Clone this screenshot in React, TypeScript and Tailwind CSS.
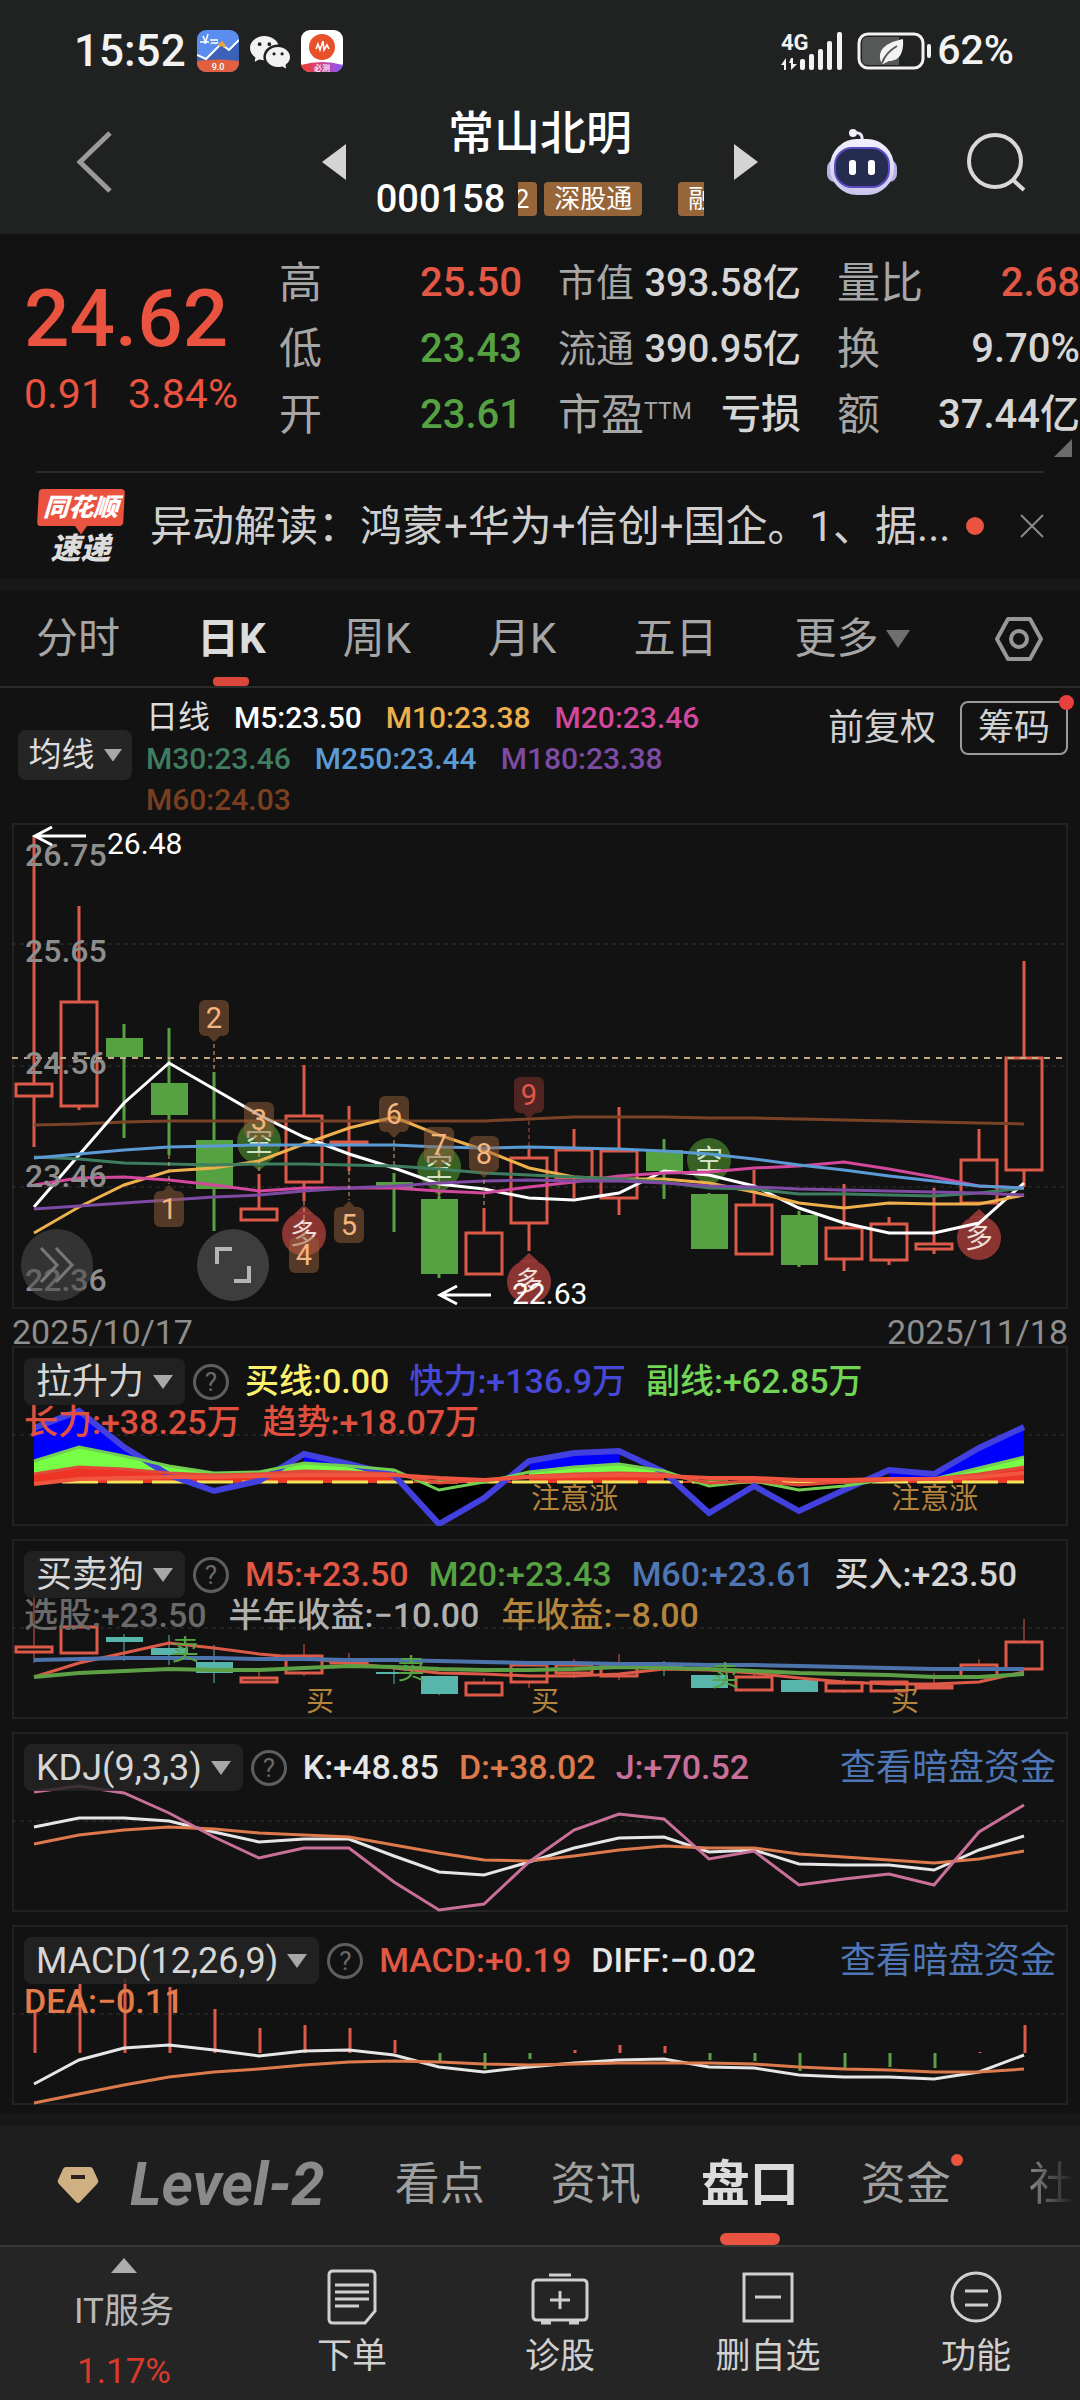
import type { ReactNode } from "react";
import { BsWechat } from "react-icons/bs";

type Candle = {
  up: boolean;
  high: number;
  top: number;
  bottom: number;
  low: number;
};
type Reading = { text: string; className: string };

const FIRST_X = 34;
const STEP = 45;
const colX = (index: number) => FIRST_X + index * STEP;
const toPoints = (values: number[], from = 0) => values.map((y, i) => `${colX(from + i)},${y}`).join(" ");

// [up, high, body top, body bottom, low]
const toCandle = ([up, high, top, bottom, low]: number[]): Candle => ({ up: up === 1, high, top, bottom, low });

const dayCandles = [
  [1, 836, 1084, 1096, 1147],
  [1, 906, 1002, 1106, 1110],
  [0, 1024, 1038, 1057, 1138],
  [0, 1028, 1083, 1115, 1155],
  [0, 1072, 1140, 1189, 1231],
  [1, 1174, 1209, 1220, 1221],
  [1, 1065, 1116, 1182, 1201],
  [1, 1106, 1142, 1143, 1171],
  [0, 1173, 1182, 1189, 1232],
  [0, 1196, 1199, 1274, 1278],
  [1, 1208, 1233, 1274, 1275],
  [1, 1149, 1158, 1223, 1251],
  [1, 1129, 1150, 1178, 1198],
  [1, 1107, 1151, 1198, 1215],
  [0, 1139, 1150, 1171, 1199],
  [0, 1193, 1194, 1249, 1249],
  [1, 1170, 1205, 1254, 1255],
  [0, 1211, 1215, 1265, 1267],
  [1, 1184, 1228, 1259, 1271],
  [1, 1217, 1224, 1260, 1265],
  [1, 1188, 1244, 1249, 1254],
  [1, 1129, 1160, 1203, 1204],
  [1, 961, 1058, 1170, 1187]
].map(toCandle);

const dogCandles = [
  [1, 1593, 1647, 1652, 1663],
  [1, 1626, 1627, 1653, 1654],
  [0, 1634, 1637, 1642, 1661],
  [0, 1635, 1648, 1655, 1665],
  [0, 1645, 1662, 1673, 1683],
  [1, 1670, 1678, 1682, 1683],
  [1, 1644, 1656, 1673, 1676],
  [1, 1653, 1661, 1663, 1664],
  [0, 1668, 1672, 1674, 1684],
  [0, 1676, 1676, 1694, 1695],
  [1, 1678, 1683, 1695, 1695],
  [1, 1664, 1665, 1682, 1688],
  [1, 1659, 1665, 1673, 1678],
  [1, 1654, 1665, 1676, 1680],
  [0, 1661, 1665, 1667, 1676],
  [0, 1675, 1675, 1688, 1688],
  [1, 1672, 1677, 1690, 1690],
  [0, 1680, 1680, 1692, 1692],
  [1, 1679, 1683, 1691, 1693],
  [1, 1681, 1682, 1691, 1691],
  [1, 1673, 1686, 1688, 1689],
  [1, 1659, 1665, 1677, 1677],
  [1, 1619, 1642, 1669, 1670]
].map(toCandle);

const averages = [
  { color: "#7a4327", values: [1125, 1124, 1122, 1121, 1121, 1121, 1121, 1121, 1121, 1121, 1121, 1119, 1117, 1117, 1117, 1118, 1118, 1119, 1120, 1121, 1122, 1123, 1124] },
  { color: "#ffffff", values: [1207, 1155, 1103, 1063, 1089, 1115, 1137, 1154, 1168, 1184, 1189, 1198, 1200, 1193, 1171, 1175, 1186, 1208, 1223, 1233, 1233, 1223, 1183] },
  { color: "#eeb04c", values: [1233, 1207, 1185, 1171, 1168, 1161, 1144, 1128, 1117, 1135, 1150, 1168, 1177, 1179, 1179, 1183, 1192, 1203, 1208, 1203, 1204, 1204, 1195] },
  { color: "#d1489c", values: [1185, 1178, 1177, 1180, 1185, 1191, 1188, 1188, 1188, 1191, 1193, 1187, 1182, 1176, 1173, 1172, 1168, 1166, 1162, 1169, 1177, 1186, 1188] },
  { color: "#3f7d61", values: [1157, 1159, 1163, 1164, 1165, 1164, 1164, 1165, 1166, 1169, 1173, 1175, 1177, 1179, 1182, 1188, 1189, 1194, 1194, 1195, 1196, 1193, 1188] },
  { color: "#5b9bd5", values: [1158, 1154, 1150, 1147, 1146, 1145, 1145, 1145, 1145, 1147, 1148, 1147, 1148, 1149, 1151, 1154, 1159, 1165, 1170, 1176, 1181, 1186, 1188] },
  { color: "#7d4ba3", values: [1209, 1206, 1203, 1200, 1197, 1195, 1191, 1188, 1186, 1183, 1181, 1180, 1181, 1181, 1183, 1186, 1187, 1189, 1190, 1191, 1192, 1193, 1195] }
];

// Nine-turn counters: top is the upper edge of the tag
const turnTags = [
  { col: 3, label: "1", top: 1191, below: true },
  { col: 4, label: "2", top: 1000, below: false },
  { col: 5, label: "3", top: 1102, below: false },
  { col: 6, label: "4", top: 1237, below: true },
  { col: 7, label: "5", top: 1207, below: true },
  { col: 8, label: "6", top: 1096, below: false },
  { col: 9, label: "7", top: 1127, below: false },
  { col: 10, label: "8", top: 1136, below: false },
  { col: 11, label: "9", top: 1077, below: false }
];

const signals = [
  { col: 5, y: 1142, label: "空" },
  { col: 9, y: 1167, label: "空" },
  { col: 15, y: 1160, label: "空" },
  { col: 6, y: 1234, label: "多" },
  { col: 11, y: 1282, label: "多" },
  { col: 21, y: 1238, label: "多" }
];

const scaleLabels = [
  { label: "26.75", y: 866 },
  { label: "25.65", y: 962 },
  { label: "24.56", y: 1074 },
  { label: "23.46", y: 1187 },
  { label: "22.36", y: 1291 }
];

const lift = {
  quick: [1428, 1411, 1447, 1475, 1491, 1481, 1454, 1464, 1475, 1524, 1498, 1461, 1453, 1451, 1472, 1513, 1486, 1511, 1490, 1470, 1474, 1448, 1427],
  second: [1461, 1447, 1456, 1466, 1473, 1472, 1463, 1466, 1470, 1490, 1482, 1472, 1467, 1464, 1471, 1486, 1481, 1490, 1486, 1479, 1479, 1468, 1457],
  long: [1474, 1467, 1469, 1473, 1475, 1474, 1471, 1472, 1474, 1483, 1480, 1476, 1474, 1473, 1474, 1483, 1481, 1485, 1482, 1480, 1479, 1474, 1467],
  trend: [1484, 1479, 1478, 1477, 1477, 1476, 1475, 1475, 1475, 1478, 1480, 1477, 1476, 1475, 1476, 1478, 1478, 1480, 1480, 1479, 1479, 1477, 1473]
};

const dog = {
  m5: [1677, 1663, 1653, 1643, 1648, 1654, 1658, 1663, 1668, 1673, 1674, 1676, 1676, 1674, 1669, 1670, 1673, 1678, 1682, 1684, 1684, 1682, 1672],
  m20: [1677, 1673, 1671, 1669, 1670, 1670, 1668, 1666, 1667, 1669, 1670, 1670, 1669, 1667, 1668, 1669, 1671, 1673, 1674, 1675, 1677, 1677, 1674],
  m60: [1660, 1659, 1658, 1658, 1658, 1659, 1659, 1660, 1660, 1661, 1662, 1663, 1663, 1664, 1664, 1665, 1665, 1666, 1667, 1668, 1669, 1669, 1669]
};

const kdj = {
  k: [1827, 1818, 1818, 1821, 1832, 1842, 1839, 1839, 1856, 1872, 1875, 1862, 1848, 1838, 1837, 1852, 1850, 1864, 1865, 1865, 1870, 1850, 1836],
  d: [1844, 1835, 1830, 1827, 1829, 1833, 1835, 1837, 1845, 1853, 1860, 1861, 1856, 1850, 1846, 1848, 1848, 1854, 1857, 1860, 1863, 1859, 1851],
  j: [1792, 1786, 1793, 1813, 1837, 1858, 1848, 1848, 1882, 1910, 1904, 1862, 1830, 1814, 1819, 1859, 1851, 1885, 1879, 1874, 1885, 1832, 1805]
};

const macd = {
  bars: [2013, 1984, 1978, 1987, 2009, 2028, 2025, 2028, 2040, 2061, 2069, 2059, 2050, 2045, 2046, 2060, 2061, 2071, 2068, 2067, 2068, 2052, 2025],
  diff: [2084, 2060, 2048, 2045, 2050, 2056, 2051, 2050, 2055, 2067, 2072, 2067, 2063, 2060, 2059, 2067, 2068, 2075, 2077, 2077, 2079, 2072, 2055],
  dea: [2103, 2094, 2085, 2077, 2072, 2069, 2065, 2062, 2061, 2062, 2064, 2065, 2064, 2063, 2063, 2063, 2064, 2067, 2069, 2070, 2072, 2072, 2069]
};

function Line({ values, color, width = 3 }: { values: number[]; color: string; width?: number }) {
  return <polyline points={toPoints(values)} fill="none" stroke={color} strokeWidth={width} />;
}

function GridLine({ y }: { y: number }) {
  return <line x1="12" x2="1068" y1={y} y2={y} stroke="#333" strokeWidth="1" strokeDasharray="4 4" />;
}

function Candles({ data, down, wick = 3 }: { data: Candle[]; down: string; wick?: number }) {
  return (
    <>
      {data.map((c, i) => {
        const x = colX(i);
        const color = c.up ? "#dd5a48" : down;
        return (
          <g key={i} stroke={color} strokeWidth={wick}>
            <line x1={x} x2={x} y1={c.high} y2={c.top} />
            <line x1={x} x2={x} y1={c.bottom} y2={c.low} />
            {c.up ? (
              <rect x={x - 18} y={c.top} width="36" height={c.bottom - c.top} fill="none" strokeWidth="3" />
            ) : (
              <rect x={x - 18} y={c.top} width="37" height={c.bottom - c.top} fill={down} stroke="none" />
            )}
          </g>
        );
      })}
    </>
  );
}

function TurnTag({ col, label, top, below }: (typeof turnTags)[number]) {
  const x = colX(col);
  const last = label === "9";
  const line = last ? "#b9504a" : "#e0a774";
  const tail = below ? `${x - 6},${top} ${x + 6},${top} ${x},${top - 6}` : `${x - 6},${top + 36} ${x + 6},${top + 36} ${x},${top + 42}`;
  return (
    <g>
      <g fill={last ? "#7a302c" : "#966039"} fillOpacity={last ? 0.6 : 0.5}>
        <rect x={x - 15} y={top} width="30" height="36" rx="6" />
        <polygon points={tail} />
      </g>
      <line x1={x} x2={x} y1={below ? top - 36 : top + 44} y2={below ? top - 7 : top + 72} stroke={line} strokeWidth="1" strokeDasharray="4 3" />
      <text x={x} y={top + 28} textAnchor="middle" fontSize="29" fill={last ? "#e0584c" : "#f5b57e"}>
        {label}
      </text>
    </g>
  );
}

function Signal({ col, y, label }: (typeof signals)[number]) {
  const x = colX(col);
  const long = label === "多";
  const tip = long ? -1 : 1;
  return (
    <g>
      <g fill={long ? "#a13c3a" : "#3f7028"} fillOpacity="0.85">
        <circle cx={x} cy={y} r="22" />
        <path d={`M${x - 10} ${y + tip * 20} L${x} ${y + tip * 29} L${x + 10} ${y + tip * 20} Z`} />
      </g>
      <text x={x} y={y + 10} textAnchor="middle" fontSize="28" fill={long ? "#f0dcd8" : "#d3e3c8"}>
        {label}
      </text>
    </g>
  );
}

function Arrow({ x, y }: { x: number; y: number }) {
  return <path d={`M${x + 52} ${y} H${x + 1} M${x + 18} ${y - 9} L${x + 1} ${y} L${x + 18} ${y + 9}`} fill="none" stroke="#fff" strokeWidth="3" />;
}

function DayChart() {
  return (
    <svg viewBox="12 823 1056 486" className="block w-full" role="img" aria-label="日K线图">
      {[944, 1066, 1187].map((y) => (
        <GridLine key={y} y={y} />
      ))}
      <Candles data={dayCandles} down="#56a142" />
      <line x1="12" x2="1068" y1="1058" y2="1058" stroke="#c4ac85" strokeWidth="2" strokeDasharray="6 6" />
      {signals.map((s) => (
        <Signal key={s.col} {...s} />
      ))}
      {averages.map((a) => (
        <Line key={a.color} values={a.values} color={a.color} />
      ))}
      {turnTags.map((t) => (
        <TurnTag key={t.label} {...t} />
      ))}
      <g fontSize="32" fontWeight="500" fill="#8e8e8e">
        {scaleLabels.map((s) => (
          <text key={s.label} x="25" y={s.y}>
            {s.label}
          </text>
        ))}
      </g>
      <Arrow x={34} y={836} />
      <Arrow x={439} y={1295} />
      <g fontSize="30" fill="#fff">
        <text x="107" y="854">26.48</text>
        <text x="512" y="1304">22.63</text>
      </g>
    </svg>
  );
}

function LiftChart() {
  const area = (upper: number[], lower: number[], from: number, to: number) => {
    const back = lower.slice(from, to + 1).map((y, i) => `${colX(from + i)},${y}`).reverse().join(" ");
    return `${toPoints(upper.slice(from, to + 1), from)} ${back}`;
  };
  const zero = lift.quick.map(() => 1482);
  return (
    <svg viewBox="12 1346 1056 180" className="col-start-1 row-start-1 block w-full" role="img" aria-label="拉升力">
      <GridLine y={1435} />
      <polygon points="401,1482 439,1524 508,1482" fill="#000" />
      <polygon points="672,1482 709,1513 754,1486 799,1511 860,1482" fill="#000" />
      <g fill="#0000ff">
        <polygon points={area(lift.quick, lift.second, 0, 2)} />
        <polygon points="124,1447 152,1465 124,1456" />
        <polygon points={area(lift.quick, lift.second, 6, 7)} />
        <polygon points={area(lift.quick, lift.second, 11, 13)} />
        <polygon points={area(lift.quick, lift.second, 19, 22)} />
      </g>
      <g fill="#76ff45">
        <polygon points={area(lift.second, lift.long, 0, 8)} />
        <polygon points={area(lift.second, lift.long, 11, 14)} />
        <polygon points={area(lift.second, lift.long, 20, 22)} />
      </g>
      <g fill="#ee3424">
        <polygon points={area(lift.long, zero, 0, 8)} />
        <polygon points={area(lift.long, zero, 11, 14)} />
        <polygon points={area(lift.long, zero, 19, 22)} />
      </g>
      <line x1="34" x2="1024" y1="1482" y2="1482" stroke="#e8392b" strokeWidth="2" />
      <line x1="62" x2="1024" y1="1482" y2="1482" stroke="#f5e35c" strokeWidth="3" strokeDasharray="36 9" />
      <Line values={lift.quick} color="#4340e0" width={6} />
      <Line values={lift.second} color="#72cf52" width={3} />
      <Line values={lift.long} color="#e04a3a" width={3} />
      <Line values={lift.trend} color="#f0563f" width={4} />
      <g fontSize="29" fill="#b5843c">
        <text x="531" y="1509">注意涨</text>
        <text x="891" y="1509">注意涨</text>
      </g>
    </svg>
  );
}

function DogChart() {
  return (
    <svg viewBox="12 1539 1056 180" className="col-start-1 row-start-1 block w-full" role="img" aria-label="买卖狗">
      <GridLine y={1628} />
      <Candles data={dogCandles} down="#58b5ab" wick={1} />
      <Line values={dog.m5} color="#dd5a48" />
      <Line values={dog.m20} color="#5d9f45" width={4} />
      <Line values={dog.m60} color="#4d73ad" width={4} />
      <g fontSize="28" fill="#55a345">
        <text x="171" y="1660">卖</text>
        <text x="397" y="1679">卖</text>
        <text x="711" y="1686">卖</text>
      </g>
      <g fontSize="28" fill="#b5843c">
        <text x="306" y="1711">买</text>
        <text x="531" y="1711">买</text>
        <text x="891" y="1711">买</text>
      </g>
    </svg>
  );
}

function KdjChart() {
  return (
    <svg viewBox="12 1732 1056 180" className="col-start-1 row-start-1 block w-full" role="img" aria-label="KDJ">
      <GridLine y={1821} />
      <Line values={kdj.k} color="#e6e6e6" />
      <Line values={kdj.d} color="#dd7a4c" />
      <Line values={kdj.j} color="#c9709a" />
    </svg>
  );
}

function MacdChart() {
  return (
    <svg viewBox="12 1925 1056 180" className="col-start-1 row-start-1 block w-full" role="img" aria-label="MACD">
      <GridLine y={2014} />
      {macd.bars.map((y, i) => (
        <line key={i} x1={colX(i) + 1} x2={colX(i) + 1} y1={y} y2="2053" stroke={y < 2053 ? "#dd5a48" : "#5d9f45"} strokeWidth="3" />
      ))}
      <Line values={macd.diff} color="#e6e6e6" />
      <Line values={macd.dea} color="#dd7a4c" />
    </svg>
  );
}

function Triangle({ className }: { className: string }) {
  return (
    <svg viewBox="0 0 20 14" className={className} aria-hidden="true">
      <path d="M0 0 H20 L10 14 Z" fill="currentColor" />
    </svg>
  );
}

function IndicatorPanel({
  name,
  first,
  second = [],
  link = false,
  children
}: {
  name: string;
  first: Reading[];
  second?: Reading[];
  link?: boolean;
  children: ReactNode;
}) {
  return (
    <section className="grid grid-cols-1 ring-2 ring-[#222] ring-inset">
      {children}
      <div className="relative col-start-1 row-start-1 px-3 pt-3 text-[34px] font-medium whitespace-nowrap">
        <div className="flex h-[47px] items-center">
          <label className="flex h-[47px] items-center gap-[9px] rounded-lg bg-[#252525]/85 px-3 text-[#d6d6d6]">
            <select aria-label="指标" className="field-sizing-content appearance-none bg-transparent text-[36px] leading-[44px] font-normal outline-none">
              <option>{name}</option>
            </select>
            <Triangle className="w-5 text-[#a8a8a8]" />
          </label>
          <button type="button" aria-label="指标说明" className="ml-2 grid size-9 shrink-0 place-items-center rounded-full border-3 border-[#5e5e5e] text-[26px] leading-none font-normal text-[#6a6a6a]">
            ?
          </button>
          <div className="ml-4 flex gap-5">
            {first.map((r) => (
              <span key={r.text} className={r.className}>{r.text}</span>
            ))}
          </div>
          {link ? (
            <a href="#funds" className="ml-auto text-[36px] font-normal text-[#4f77b5]">
              查看暗盘资金
            </a>
          ) : null}
        </div>
        <div className="flex gap-[22px] leading-[34px]">
          {second.map((r) => (
            <span key={r.text} className={r.className}>{r.text}</span>
          ))}
        </div>
      </div>
    </section>
  );
}

function StatusBar() {
  return (
    <div className="flex h-[102px] items-center justify-between pr-[66px] pl-[74px] text-[44px] font-medium text-[#f2f2f2]">
      <div className="flex items-center gap-[11px]">
        <span>15:52</span>
        <svg viewBox="0 0 42 42" className="size-[42px]" aria-hidden="true">
          <rect width="42" height="42" rx="9" fill="#5b8def" />
          <path d="M0 26 L9 29 L24 14 L32 20 L42 10 V33 H0Z" fill="#3c62b8" />
          <path d="M0 25 L9 29 L24 14 L32 20 L42 10" fill="none" stroke="#fff" strokeWidth="2" />
          <path d="M22 16 L25 13 L28 17" fill="none" stroke="#f0a23c" strokeWidth="3" />
          <path d="M3 12 H12 M6 6 L9 13 M11 4 L8 14 M13 10 H21 M14 14 C16 10 18 16 21 12" fill="none" stroke="#fff" strokeWidth="1.5" />
          <path d="M0 31 Q21 28 42 31 V33 A9 9 0 0 1 33 42 H9 A9 9 0 0 1 0 33Z" fill="#e0603f" />
          <text x="21" y="40" textAnchor="middle" fontSize="9" fill="#fff">9.0</text>
        </svg>
        <BsWechat size={40} />
        <svg viewBox="0 0 42 42" className="size-[42px]" aria-hidden="true">
          <defs>
            <linearGradient id="badge" x1="0" x2="1">
              <stop offset="0" stopColor="#e8402c" />
              <stop offset="0.5" stopColor="#d63f8f" />
              <stop offset="1" stopColor="#7c5cff" />
            </linearGradient>
          </defs>
          <rect width="42" height="42" rx="9" fill="#fff" />
          <circle cx="21" cy="17" r="13" fill="#e8502a" />
          <path d="M15 19 L17 14 L19 20 L22 11 L23 20 L26 15 L28 19" fill="none" stroke="#fff" strokeWidth="1.6" />
          <path d="M0 35 Q21 29 42 35 A9 9 0 0 1 33 42 H9 A9 9 0 0 1 0 35Z" fill="url(#badge)" />
          <text x="21" y="41" textAnchor="middle" fontSize="8" fill="#fff">必测</text>
        </svg>
      </div>
      <div className="flex items-center">
        <svg viewBox="0 0 62 38" className="h-[38px] w-[62px]" aria-hidden="true">
          <text x="0" y="18" fontSize="22" fontWeight="700" fill="#f2f2f2">4G</text>
          <g fill="#f2f2f2">
            <rect x="19" y="27" width="5" height="11" rx="2" />
            <rect x="28" y="22" width="5" height="16" rx="2" />
            <rect x="37" y="17" width="5" height="21" rx="2" />
            <rect x="46" y="9" width="5" height="29" rx="2" />
            <rect x="56" y="0" width="5" height="38" rx="2" />
            <path d="M0 33 L5 26 V38 H3 V33Z M10 26 V31 H8 M10 38 L16 32 H12 V26 H10Z" />
          </g>
        </svg>
        <svg viewBox="0 0 76 38" className="ml-[14px] h-[38px] w-[76px]" aria-hidden="true">
          <path d="M10 5 H42 V33 H10 A5 5 0 0 1 5 28 V10 A5 5 0 0 1 10 5Z" fill="#555857" />
          <rect x="2" y="2" width="64" height="34" rx="9" fill="none" stroke="#f2f2f2" strokeWidth="3" />
          <rect x="70" y="12" width="4" height="14" rx="2" fill="#f2f2f2" />
          <path d="M46 7 C47 20 43 29 32 29 L26 32 L24 30 C20 18 28 11 46 7Z" fill="#f2f2f2" />
          <path d="M25 31 C28 23 33 18 40 14" fill="none" stroke="#555857" strokeWidth="2" />
        </svg>
        <span className="ml-1 text-[41px]">62%</span>
      </div>
    </div>
  );
}

function Robot() {
  return (
    <svg viewBox="0 0 72 68" className="h-[68px] w-[72px]" aria-hidden="true">
      <defs>
        <linearGradient id="shell" x1="0" y1="0" x2="0" y2="1">
          <stop offset="0" stopColor="#f3f1ff" />
          <stop offset="1" stopColor="#c9c4ec" />
        </linearGradient>
      </defs>
      <path d="M36 13 C37 6 33 4 28 5" fill="none" stroke="#e9e7fa" strokeWidth="3" />
      <circle cx="27" cy="5" r="4" fill="#f1effc" />
      <rect x="1" y="32" width="70" height="22" rx="8" fill="#b9b3e4" />
      <rect x="4" y="11" width="64" height="56" rx="27" fill="url(#shell)" />
      <rect x="9" y="20" width="54" height="39" rx="17" fill="#242c50" stroke="#5a4bc0" strokeWidth="2" />
      <rect x="23" y="32" width="7" height="15" rx="3" fill="#fff" />
      <rect x="42" y="32" width="7" height="15" rx="3" fill="#fff" />
    </svg>
  );
}

function TitleBar() {
  return (
    <div className="grid h-[132px] grid-cols-[1fr_auto_1fr] items-center pb-3">
      <button type="button" aria-label="返回" className="ml-[76px] w-9">
        <svg viewBox="0 0 36 62" className="h-[62px] w-9 text-[#9a9a9a]" aria-hidden="true">
          <path d="M34 2 L4 31 L34 60" fill="none" stroke="currentColor" strokeWidth="5" />
        </svg>
      </button>
      <div className="flex items-center gap-[30px] text-white">
        <button type="button" aria-label="上一只">
          <svg viewBox="0 0 24 36" className="h-9 w-6 text-[#d4d4d4]" aria-hidden="true">
            <path d="M24 0 V36 L0 18Z" fill="currentColor" />
          </svg>
        </button>
        <div className="flex flex-col items-center gap-[18px]">
          <h1 className="text-[46px] leading-[56px] font-medium">常山北明</h1>
          <div className="flex h-10 items-center gap-[13px]">
            <span className="text-[38px] leading-10 font-medium">000158</span>
            <div className="flex w-[186px] gap-[7px] overflow-hidden text-[26px] leading-[34px] whitespace-nowrap">
              <span className="flex w-[19px] shrink-0 justify-end rounded-r-sm bg-[#966539] pr-2">2</span>
              <span className="mr-[29px] shrink-0 rounded-sm bg-[#966539] px-[10px]">深股通</span>
              <span className="shrink-0 rounded-sm bg-[#966539] px-[10px]">融</span>
            </div>
          </div>
        </div>
        <button type="button" aria-label="下一只">
          <svg viewBox="0 0 24 36" className="h-9 w-6 text-[#d4d4d4]" aria-hidden="true">
            <path d="M0 0 V36 L24 18Z" fill="currentColor" />
          </svg>
        </button>
      </div>
      <div className="flex items-center justify-end gap-[68px] pr-[54px]">
        <button type="button" aria-label="智能助手">
          <Robot />
        </button>
        <button type="button" aria-label="搜索">
          <svg viewBox="0 0 60 60" className="size-[60px] text-[#d8d8d8]" aria-hidden="true">
            <circle cx="29" cy="29" r="26" fill="none" stroke="currentColor" strokeWidth="4" />
            <path d="M47 48 L58 58" stroke="currentColor" strokeWidth="4" />
          </svg>
        </button>
      </div>
    </div>
  );
}

function QuoteRow({ label, value, className = "text-[#d6d6d6]", small = false }: { label: ReactNode; value: string; className?: string; small?: boolean }) {
  return (
    <div className={small ? "flex justify-between text-[38px]" : "flex justify-between text-[40px]"}>
      <dt className={small ? "text-[#a6a6a6]" : "text-[43px] text-[#a6a6a6]"}>{label}</dt>
      <dd className={`font-medium ${className}`}>{value}</dd>
    </div>
  );
}

function Quote() {
  return (
    <section className="relative flex pt-4 pb-[23px] whitespace-nowrap">
      <div className="w-[279px] shrink-0 pt-[29px] pl-6 text-[#e9533f]">
        <p className="text-[80px] leading-[80px] font-medium">24.62</p>
        <p className="mt-[10px] flex gap-6 text-[41px] leading-[50px]">
          <span>0.91</span>
          <span>3.84%</span>
        </p>
      </div>
      <div className="grid flex-1 grid-cols-3 gap-x-9 leading-[66px]">
        <dl>
          <QuoteRow label="高" value="25.50" className="text-[#e35745]" />
          <QuoteRow label="低" value="23.43" className="text-[#56a142]" />
          <QuoteRow label="开" value="23.61" className="text-[#56a142]" />
        </dl>
        <dl>
          <QuoteRow label="市值" value="393.58亿" small />
          <QuoteRow label="流通" value="390.95亿" small />
          <QuoteRow label={<>市盈<sup className="text-[23px]">TTM</sup></>} value="亏损" />
        </dl>
        <dl>
          <QuoteRow label="量比" value="2.68" className="text-[#e35745]" />
          <QuoteRow label="换" value="9.70%" />
          <QuoteRow label="额" value="37.44亿" />
        </dl>
      </div>
      <svg viewBox="0 0 18 18" className="absolute right-2 bottom-[14px] size-[18px] text-[#6b6b6b]" aria-hidden="true">
        <path d="M18 0 V18 H0Z" fill="currentColor" />
      </svg>
    </section>
  );
}

function News() {
  return (
    <section className="mx-9 flex h-[108px] items-center border-t-2 border-[#2b2b2b]">
      <div className="mr-[25px] flex w-[89px] shrink-0 flex-col items-center font-black italic">
        <span className="w-[86px] -skew-x-3 rounded-sm bg-[#e9533f] text-center text-[25px] leading-[37px] text-white">同花顺</span>
        <Triangle className="w-3 text-[#e9533f]" />
        <span className="text-[30px] leading-[28px] text-[#dcdcdc]">速递</span>
      </div>
      <a href="#news" className="flex-1 truncate text-[42px] text-[#cfcfcf]">异动解读：鸿蒙+华为+信创+国企。1、据...</a>
      <span className="ml-3 size-[18px] shrink-0 rounded-full bg-[#e9533f]" />
      <button type="button" aria-label="关闭" className="ml-9 shrink-0">
        <svg viewBox="0 0 24 24" className="size-6 text-[#8a8a8a]" aria-hidden="true">
          <path d="M1 1 L23 23 M23 1 L1 23" stroke="currentColor" strokeWidth="2" />
        </svg>
      </button>
    </section>
  );
}

function PeriodTabs() {
  return (
    <nav className="flex h-[97px] items-stretch gap-[77px] border-b-2 border-[#2b2b2b] px-9 text-[42px] whitespace-nowrap text-[#a6a6a6]">
      <button type="button">分时</button>
      <button type="button" aria-current="true" className="relative font-bold text-[#dcdcdc]">
        日K
        <span className="absolute bottom-0 left-1/2 h-[9px] w-9 -translate-x-1/2 rounded-sm bg-[#d9483a]" />
      </button>
      <button type="button">周K</button>
      <button type="button">月K</button>
      <button type="button">五日</button>
      <button type="button" aria-haspopup="menu" className="flex items-center gap-2">
        更多
        <svg viewBox="0 0 24 18" className="w-6 text-[#6f6f6f]" aria-hidden="true">
          <path d="M0 0 H24 L12 18Z" fill="currentColor" />
        </svg>
      </button>
      <button type="button" aria-label="设置" className="ml-auto">
        <svg viewBox="0 0 50 46" className="h-[46px] w-[50px] text-[#979797]" fill="none" stroke="currentColor" strokeWidth="4" strokeLinejoin="round" aria-hidden="true">
          <path d="M14 3 H36 L47 23 L36 43 H14 L3 23Z" />
          <circle cx="25" cy="23" r="8" />
        </svg>
      </button>
    </nav>
  );
}

function AverageLegend() {
  return (
    <section className="flex items-start gap-[14px] pt-[9px] pr-3 pb-[3px] pl-[18px] whitespace-nowrap">
      <label className="mt-[33px] flex h-[50px] w-[114px] shrink-0 items-center justify-center gap-[9px] rounded-lg bg-[#252525] text-[#dcdcdc]">
        <select aria-label="主图指标" className="field-sizing-content appearance-none bg-transparent text-[33px] leading-10 outline-none">
          <option>均线</option>
        </select>
        <Triangle className="w-[18px] text-[#a8a8a8]" />
      </label>
      <div className="flex max-w-[640px] flex-1 flex-wrap gap-x-6 text-[30px] leading-[41px] font-medium">
        <span className="text-[32px] font-normal text-[#dcdcdc]">日线</span>
        <span className="text-white">M5:23.50</span>
        <span className="text-[#eeb04c]">M10:23.38</span>
        <span className="text-[#d1489c]">M20:23.46</span>
        <span className="text-[#3f7d61]">M30:23.46</span>
        <span className="text-[#5b9bd5]">M250:23.44</span>
        <span className="text-[#7d4ba3]">M180:23.38</span>
        <span className="text-[#7a3f20]">M60:24.03</span>
      </div>
      <div className="mt-1 ml-auto flex items-center gap-6 text-[36px] text-[#d0d0d0]">
        <button type="button" className="leading-[54px]">前复权</button>
        <button type="button" className="relative h-[54px] rounded-lg border-2 border-[#9a9a9a] px-4 leading-[50px]">
          筹码
          <span className="absolute -top-2 -right-2 size-[15px] rounded-full bg-[#e8403c]" />
        </button>
      </div>
    </section>
  );
}

function BottomTabs() {
  return (
    <nav className="flex h-[120px] items-stretch overflow-hidden bg-[#1e1e1e] pl-[57px] text-[45px] whitespace-nowrap text-[#a0a0a0]">
      <button type="button" className="flex items-center gap-[31px] text-[60px] font-bold text-[#8a8a8a] italic">
        <svg viewBox="0 0 42 36" className="w-[42px]" aria-hidden="true">
          <path d="M9 0 H33 Q35 0 36 2 L41 13 Q42 15 40 17 L23 35 Q21 37 19 35 L2 17 Q0 15 1 13 L6 2 Q7 0 9 0Z" fill="#cfb083" />
          <path d="M14 10 H28" stroke="#2a241c" strokeWidth="4" />
        </svg>
        Level-2
      </button>
      <button type="button" className="ml-[70px]">看点</button>
      <button type="button" className="ml-[66px]">资讯</button>
      <button type="button" aria-current="true" className="relative ml-[60px] text-[49px] font-bold text-[#dcdcdc]">
        盘口
        <span className="absolute bottom-0 left-1/2 h-3 w-[60px] -translate-x-1/2 rounded-md bg-[#e9533f]" />
      </button>
      <button type="button" className="relative ml-[62px]">
        资金
        <span className="absolute top-[29px] -right-3 size-3 rounded-full bg-[#e9533f]" />
      </button>
      <button type="button" className="ml-[78px] bg-linear-to-r from-[#8a8a8a] to-[#1e1e1e] bg-clip-text text-transparent">社</button>
    </nav>
  );
}

function ToolButton({ label, children }: { label: string; children: ReactNode }) {
  return (
    <button type="button" className="flex flex-1 flex-col items-center pt-5">
      <svg viewBox="0 0 60 60" className="size-[60px]" fill="none" stroke="#d0d0d0" strokeWidth="3" aria-hidden="true">
        {children}
      </svg>
      <span className="mt-[7px] leading-[46px]">{label}</span>
    </button>
  );
}

function Toolbar() {
  return (
    <footer className="flex h-[155px] border-t-2 border-[#3a3a3a] bg-[#252525] text-[35px] text-[#d0d0d0]">
      <button type="button" className="flex w-[248px] flex-col items-center pt-[11px]">
        <svg viewBox="0 0 26 15" className="w-[26px] text-[#adadad]" aria-hidden="true">
          <path d="M0 15 L13 0 L26 15Z" fill="currentColor" />
        </svg>
        <span className="mt-4 leading-[46px] text-[#b8b8b8]">IT服务</span>
        <span className="mt-4 leading-[42px] text-[#d93a2b]">1.17%</span>
      </button>
      <ToolButton label="下单">
        <path d="M11 4 H49 Q53 4 53 8 V44 L43 56 H11 Q7 56 7 52 V8 Q7 4 11 4Z" />
        <path d="M13 18 H47 M13 25 H47 M13 32 H47 M13 39 H37" />
      </ToolButton>
      <ToolButton label="诊股">
        <path d="M7 13 H53 Q57 13 57 17 V49 Q57 53 53 53 H7 Q3 53 3 49 V17 Q3 13 7 13Z M19 8 H41 M11 56 H21 M39 56 H49 M30 24 V42 M20 33 H40" />
      </ToolButton>
      <ToolButton label="删自选">
        <path d="M6 7 H54 V54 H6Z M17 30 H43" />
      </ToolButton>
      <ToolButton label="功能">
        <circle cx="30" cy="30" r="24" />
        <path d="M19 24 H42 M19 38 H42" />
      </ToolButton>
    </footer>
  );
}

export default function App() {
  return (
    <div className="min-h-screen w-full overflow-x-hidden bg-[#121212] font-[Roboto,'Noto_Sans_CJK_SC',sans-serif]">
      <header className="bg-[#1f2221]">
        <StatusBar />
        <TitleBar />
      </header>
      <Quote />
      <News />
      <div className="h-3 bg-[#171717]" />
      <PeriodTabs />
      <AverageLegend />
      <main className="mx-3">
        <div className="relative ring-2 ring-[#222] ring-inset">
          <DayChart />
          <button type="button" aria-label="展开" className="absolute bottom-2 left-[9px] grid size-[72px] place-items-center rounded-full bg-[#4a4a4a]/60">
            <svg viewBox="0 0 36 36" className="size-9 text-[#777]" aria-hidden="true">
              <path d="M2 1 L18 18 L2 35 M17 1 L33 18 L17 35" fill="none" stroke="currentColor" strokeWidth="3" />
            </svg>
          </button>
          <button type="button" aria-label="全屏" className="absolute bottom-2 left-[185px] grid size-[72px] place-items-center rounded-full bg-[#3d3d3d]">
            <svg viewBox="0 0 36 36" className="size-9 text-[#b5b5b5]" aria-hidden="true">
              <path d="M2 17 V2 H17 M34 19 V34 H19" fill="none" stroke="currentColor" strokeWidth="4" />
            </svg>
          </button>
        </div>
        <div className="flex h-[37px] items-end justify-between text-[34px] leading-[28px] text-[#8e8e8e]">
          <time>2025/10/17</time>
          <time>2025/11/18</time>
        </div>
        <div className="flex flex-col gap-[13px]">
          <IndicatorPanel
            name="拉升力"
            first={[
              { text: "买线:0.00", className: "text-[#fbf06c]" },
              { text: "快力:+136.9万", className: "text-[#4648d8]" },
              { text: "副线:+62.85万", className: "text-[#72d556]" }
            ]}
            second={[
              { text: "长力:+38.25万", className: "text-[#e0503f]" },
              { text: "趋势:+18.07万", className: "text-[#e0503f]" }
            ]}
          >
            <LiftChart />
          </IndicatorPanel>
          <IndicatorPanel
            name="买卖狗"
            first={[
              { text: "M5:+23.50", className: "text-[#e35745]" },
              { text: "M20:+23.43", className: "text-[#56a142]" },
              { text: "M60:+23.61", className: "text-[#4f77b5]" },
              { text: "买入:+23.50", className: "text-[#d6d6d6]" }
            ]}
            second={[
              { text: "选股:+23.50", className: "text-[#6a6a6a]" },
              { text: "半年收益:−10.00", className: "text-[#b0b0b0]" },
              { text: "年收益:−8.00", className: "text-[#b5843c]" }
            ]}
          >
            <DogChart />
          </IndicatorPanel>
          <IndicatorPanel
            name="KDJ(9,3,3)"
            link
            first={[
              { text: "K:+48.85", className: "text-[#e6e6e6]" },
              { text: "D:+38.02", className: "text-[#dd7a4c]" },
              { text: "J:+70.52", className: "text-[#c9709a]" }
            ]}
          >
            <KdjChart />
          </IndicatorPanel>
          <IndicatorPanel
            name="MACD(12,26,9)"
            link
            first={[
              { text: "MACD:+0.19", className: "text-[#e35745]" },
              { text: "DIFF:−0.02", className: "text-[#e6e6e6]" }
            ]}
            second={[{ text: "DEA:−0.11", className: "text-[#e37b4a]" }]}
          >
            <MacdChart />
          </IndicatorPanel>
        </div>
      </main>
      <div className="mt-2 h-3 bg-[#171717]" />
      <BottomTabs />
      <Toolbar />
    </div>
  );
}
